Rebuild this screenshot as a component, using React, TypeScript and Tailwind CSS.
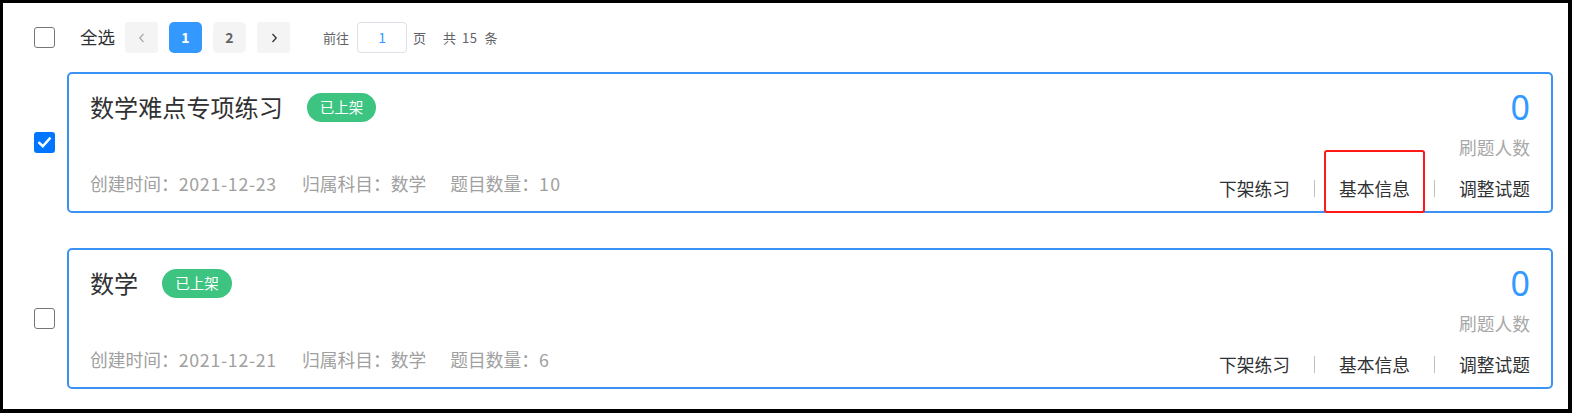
import React from "react";

const FONT = { fontFamily: '"Noto Sans CJK SC", "Noto Sans", "Liberation Sans", sans-serif' };

function Box({ checked }: { checked?: boolean }) {
  if (checked) {
    return (
      <div className="w-[21px] h-[21px] rounded-[3px] bg-[#0075ff] flex items-center justify-center shrink-0">
        <svg width="15" height="15" viewBox="0 0 16 16">
          <path d="M2.5 8.5 L6.2 12 L13.5 3.8" fill="none" stroke="#fff" strokeWidth="2.6" strokeLinecap="square" />
        </svg>
      </div>
    );
  }
  return <div className="w-[21px] h-[21px] rounded-[3px] border border-[#767676] bg-white shrink-0" />;
}

function Card({
  title,
  date,
  count,
  highlight,
}: {
  title: string;
  date: string;
  count: string;
  highlight?: boolean;
}) {
  return (
    <div className="w-[1486px] h-[141px] border-2 border-[#3a92f5] rounded-[5px] px-[21px] flex justify-between">
      <div className="pt-[18px] flex flex-col">
        <div className="h-[30px] flex items-center">
          <span className="text-[24.1px] leading-[30px] text-[#303133]">{title}</span>
          <span className="ml-[24px] h-[29px] px-[13px] rounded-full bg-[#3cc480] text-white text-[14.5px] flex items-center">
            已上架
          </span>
        </div>
        <div className="mt-[49px] h-[24px] flex items-center text-[17.75px] leading-[24px] text-[#a0a0a0]">
          <span className="mr-[25px]">
            创建时间：<span className="tracking-[0.7px]">{date}</span>
          </span>
          <span className="mr-[24px]">归属科目：数学</span>
          <span>
            题目数量：<span className="tracking-[1.5px]">{count}</span>
          </span>
        </div>
      </div>
      <div className="pt-[16px] flex flex-col items-end">
        <div className="text-[34px] leading-[35px] text-[#3399ff]" style={{ fontFamily: '"Noto Sans", "Liberation Sans", sans-serif' }}>0</div>
        <div className="mt-[10px] text-[17.75px] leading-[24px] text-[#a8a8a8]">刷题人数</div>
        <div className="mt-[17px] h-[24px] flex items-center text-[17.75px] leading-[24px] text-[#303133]">
          <span>下架练习</span>
          <span className="mx-[24px] w-px h-[17px] bg-[#c0c0c0]" />
          <span className="relative">
            基本信息
            {highlight && (
              <span className="absolute left-[-15px] right-[-15px] top-[-26px] bottom-[-13px] border-2 border-[#ff1a1a] rounded-[3px]" />
            )}
          </span>
          <span className="mx-[24px] w-px h-[17px] bg-[#c0c0c0]" />
          <span>调整试题</span>
        </div>
      </div>
    </div>
  );
}

export default function App() {
  return (
    <div
      className="w-[1572px] h-[413px] box-border border-black border-t-[3px] border-l-[3px] border-r-[4px] border-b-[4px] bg-white pl-[31px] pt-[19px]"
      style={FONT}
    >
      <div className="h-[31px] flex items-center">
        <Box />
        <span className="ml-[25px] text-[17.5px] text-[#303133]">全选</span>
        <div className="ml-[10px] flex items-center gap-[11px]">
          <div className="w-[33px] h-[31px] rounded-[3px] bg-[#f4f4f5] flex items-center justify-center">
            <svg width="12" height="12" viewBox="0 0 12 12">
              <path d="M7.5 2 L3.8 6 L7.5 10" fill="none" stroke="#a8abb2" strokeWidth="1.3" />
            </svg>
          </div>
          <div className="w-[33px] h-[31px] rounded-[5px] bg-[#3399ff] text-white font-bold text-[14px] flex items-center justify-center">
            1
          </div>
          <div className="w-[33px] h-[31px] rounded-[5px] bg-[#f4f4f5] text-[#606266] font-bold text-[14px] flex items-center justify-center">
            2
          </div>
          <div className="w-[33px] h-[31px] rounded-[3px] bg-[#f4f4f5] flex items-center justify-center">
            <svg width="12" height="12" viewBox="0 0 12 12">
              <path d="M4.5 2 L8.2 6 L4.5 10" fill="none" stroke="#303133" strokeWidth="1.3" />
            </svg>
          </div>
        </div>
        <span className="ml-[33px] text-[13px] text-[#606266]">前往</span>
        <div className="ml-[8px] w-[50px] h-[31px] border border-[#dcdfe6] rounded-[4px] flex items-center justify-center text-[14px] text-[#3399ff]">
          1
        </div>
        <span className="ml-[6px] text-[13px] text-[#606266]">页</span>
        <span className="ml-[17px] text-[13px] text-[#606266]">共</span>
        <span className="ml-[6px] text-[13px] text-[#606266] tracking-[0.5px]">15</span>
        <span className="ml-[7px] text-[13px] text-[#606266]">条</span>
      </div>

      <div className="mt-[19px] flex items-center gap-[12px]">
        <Box checked />
        <Card title="数学难点专项练习" date="2021-12-23" count="10" highlight />
      </div>
      <div className="mt-[35px] flex items-center gap-[12px]">
        <Box />
        <Card title="数学" date="2021-12-21" count="6" />
      </div>
    </div>
  );
}
